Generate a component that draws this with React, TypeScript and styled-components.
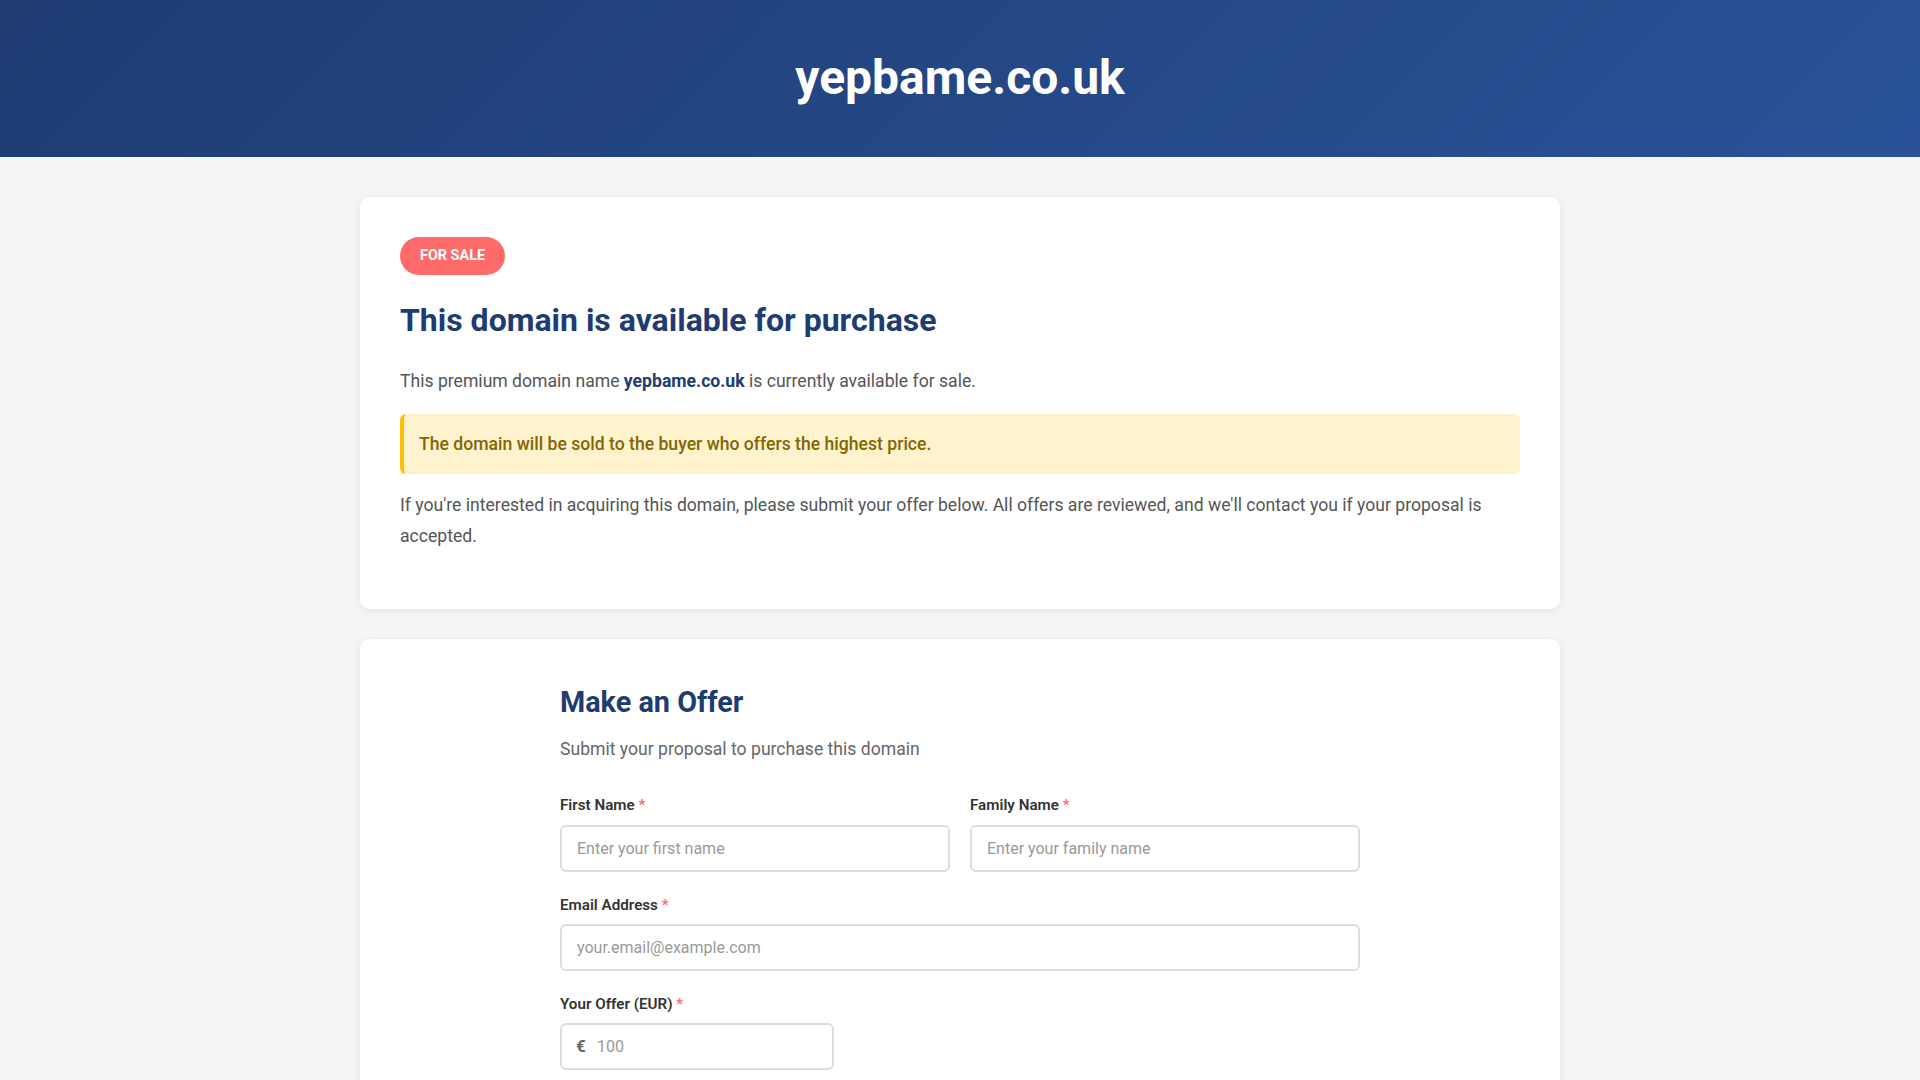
import React from 'react';
import styled, { createGlobalStyle } from 'styled-components';

const GlobalStyle = createGlobalStyle`
  * {
    box-sizing: border-box;
  }

  body {
    margin: 0;
    background: #f5f5f5;
    font-family: Roboto, "Liberation Sans", Arial, sans-serif;
    color: #333;
    line-height: 1.6;
  }
`;

const Header = styled.header`
  background: linear-gradient(135deg, #1e3c72 0%, #2a5298 100%);
  padding: 40px 20px;
  text-align: center;

  h1 {
    margin: 0;
    color: #fff;
    font-size: 48px;
    font-weight: 700;
    line-height: 1.6;
  }
`;

const Main = styled.main`
  max-width: 1200px;
  margin: 40px auto 0;
  display: flex;
  flex-direction: column;
  gap: 30px;
`;

const Card = styled.section`
  background: #fff;
  border-radius: 10px;
  padding: 40px;
  box-shadow: 0 2px 10px rgba(0, 0, 0, 0.08);
`;

const Badge = styled.span`
  display: inline-block;
  background: #ff6b6b;
  color: #fff;
  font-size: 14.4px;
  font-weight: 700;
  line-height: 22px;
  padding: 8px 20px;
  border-radius: 20px;
  text-transform: uppercase;
  margin-bottom: 20px;
`;

const Title = styled.h2`
  margin: 0 0 20px;
  color: #1e3c72;
  font-size: 32px;
  font-weight: 700;
  line-height: 1.6;
`;

const Text = styled.p`
  margin: 0 0 16px;
  color: #555;
  font-size: 17.6px;
  line-height: 1.8;

  strong {
    color: #1e3c72;
    font-weight: 700;
  }
`;

const Notice = styled.div`
  background: #fff3cd;
  border-left: 4px solid #ffc107;
  border-radius: 6px;
  padding: 16px 16px 16px 15px;
  margin-bottom: 16px;
  color: #856404;
  font-size: 17.6px;
  font-weight: 500;
  line-height: 1.6;
`;

const Form = styled.form`
  max-width: 800px;
  margin: 0 auto;
`;

const FormTitle = styled.h2`
  margin: 0 0 10px;
  color: #1e3c72;
  font-size: 28.8px;
  font-weight: 700;
  line-height: 1.6;
`;

const FormSubtitle = styled.p`
  margin: 0 0 30px;
  color: #666;
  font-size: 17.6px;
`;

const Row = styled.div`
  display: grid;
  grid-template-columns: 1fr 1fr;
  gap: 20px;
`;

const Group = styled.div<{ $narrow?: boolean }>`
  margin-bottom: 21px;
  max-width: ${p => (p.$narrow ? '274px' : 'none')};
`;

const Label = styled.label`
  display: block;
  margin-bottom: 7px;
  color: #333;
  font-size: 15.2px;
  font-weight: 600;
  line-height: 1.6;

  span {
    color: #ff6b6b;
  }
`;

const Input = styled.input<{ $prefixed?: boolean }>`
  width: 100%;
  display: block;
  padding: 12px 15px 12px ${p => (p.$prefixed ? '35px' : '15px')};
  border: 2px solid #ddd;
  border-radius: 6px;
  font-family: inherit;
  font-size: 16px;
  color: #333;
  background: #fff;
  outline: none;

  &::placeholder {
    color: #999;
  }
`;

const InputWrap = styled.div`
  position: relative;
`;

const Currency = styled.span`
  position: absolute;
  left: 16px;
  top: 50%;
  transform: translateY(-50%);
  color: #666;
  font-size: 17px;
  font-weight: 700;
`;

export default function App() {
  return (
    <>
      <GlobalStyle />
      <Header>
        <h1>yepbame.co.uk</h1>
      </Header>
      <Main>
        <Card>
          <Badge>For Sale</Badge>
          <Title>This domain is available for purchase</Title>
          <Text>
            This premium domain name <strong>yepbame.co.uk</strong> is currently available for sale.
          </Text>
          <Notice>The domain will be sold to the buyer who offers the highest price.</Notice>
          <Text>
            If you're interested in acquiring this domain, please submit your offer below. All offers are
            reviewed, and we'll contact you if your proposal is accepted.
          </Text>
        </Card>
        <Card>
          <Form onSubmit={e => e.preventDefault()}>
            <FormTitle>Make an Offer</FormTitle>
            <FormSubtitle>Submit your proposal to purchase this domain</FormSubtitle>
            <Row>
              <Group>
                <Label htmlFor="firstName">
                  First Name <span>*</span>
                </Label>
                <Input id="firstName" placeholder="Enter your first name" />
              </Group>
              <Group>
                <Label htmlFor="familyName">
                  Family Name <span>*</span>
                </Label>
                <Input id="familyName" placeholder="Enter your family name" />
              </Group>
            </Row>
            <Group>
              <Label htmlFor="email">
                Email Address <span>*</span>
              </Label>
              <Input id="email" type="email" placeholder="your.email@example.com" />
            </Group>
            <Group $narrow>
              <Label htmlFor="offer">
                Your Offer (EUR) <span>*</span>
              </Label>
              <InputWrap>
                <Currency>€</Currency>
                <Input id="offer" type="number" $prefixed placeholder="100" />
              </InputWrap>
            </Group>
          </Form>
        </Card>
      </Main>
    </>
  );
}
